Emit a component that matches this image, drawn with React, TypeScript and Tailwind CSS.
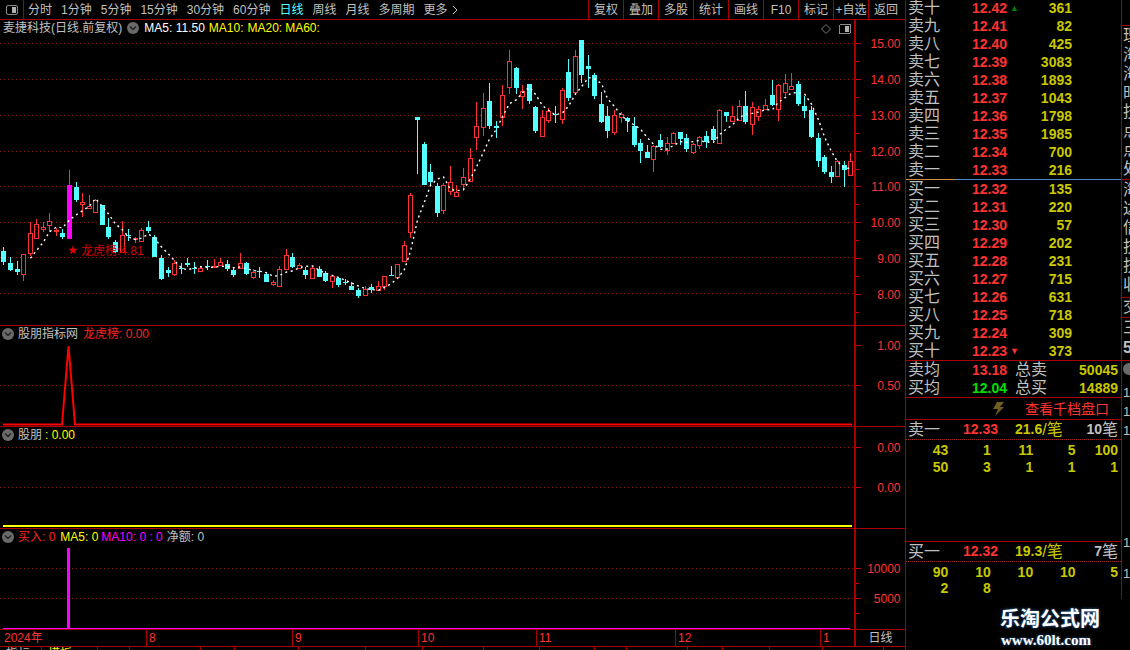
import type { ReactNode } from 'react'

const LINE = 'border-[#a80000]'
const CJK = "font-['Liberation_Sans','Noto_Sans_CJK_SC',sans-serif]"

// candles as [wickTop, bodyTop, bodyBottom, wickBottom, kind], read in 3x crop coordinates
type Raw = [number, number, number, number, 'r' | 'c' | 'm']

const partA: Raw[] = [
  [292, 303, 335, 345, 'c'], [322, 339, 360, 363, 'c'], [333, 357, 366, 375, 'c'], [313, 313, 371, 392, 'r'],
  [217, 250, 310, 318, 'r'], [208, 223, 263, 265, 'r'], [217, 232, 238, 245, 'r'], [190, 214, 226, 245, 'r'],
  [235, 240, 243, 258, 'r'], [238, 250, 260, 268, 'c'], [60, 105, 267, 267, 'm'], [97, 111, 149, 155, 'c'],
  [130, 157, 163, 200, 'r'], [136, 167, 173, 178, 'r'], [148, 151, 185, 187, 'r'], [165, 166, 225, 226, 'c'],
  [205, 232, 260, 268, 'c'], [270, 276, 305, 310, 'c'], [213, 256, 305, 310, 'r'], [238, 254, 257, 272, 'c'],
  [260, 264, 268, 280, 'r'], [235, 241, 272, 275, 'r'], [213, 232, 243, 248, 'c'], [256, 260, 320, 320, 'c'],
  [316, 324, 388, 391, 'c'], [350, 360, 369, 380, 'c'], [330, 340, 371, 378, 'r'], [340, 355, 357, 372, 'c'],
  [325, 339, 345, 350, 'c'], [336, 355, 357, 372, 'c'], [350, 353, 362, 363, 'r'], [330, 348, 351, 360, 'c'],
  [328, 347, 352, 355, 'r'], [323, 337, 344, 347, 'r'], [330, 343, 358, 362, 'c'], [350, 361, 375, 381, 'c'],
  [309, 340, 354, 358, 'r'], [336, 339, 372, 376, 'c'], [358, 367, 380, 386, 'r'], [351, 364, 366, 384, 'c'],
  [368, 372, 395, 397, 'c'], [390, 397, 401, 408, 'r'], [348, 358, 407, 408, 'r'], [297, 316, 358, 360, 'r'],
  [309, 321, 351, 353, 'c'], [340, 346, 355, 358, 'r'], [350, 360, 374, 387, 'c'], [350, 355, 383, 384, 'r'],
  [349, 357, 380, 381, 'c'], [363, 368, 394, 397, 'c'], [375, 379, 392, 414, 'r'], [380, 384, 404, 410, 'c'],
  [388, 397, 399, 404, 'c'], [396, 408, 419, 420, 'c'], [415, 420, 438, 443, 'c'], [408, 416, 434, 438, 'r'],
  [403, 412, 421, 428, 'c'], [394, 408, 420, 422, 'r'], [378, 379, 407, 420, 'r'], [348, 376, 378, 378, 'c'],
  [343, 343, 380, 382, 'r'], [274, 286, 332, 333, 'r'], [130, 136, 245, 265, 'r'],
]

const partB: Raw[] = [
  [262, 262, 270, 432, 'c'], [337, 342, 465, 465, 'c'], [403, 426, 456, 465, 'c'], [458, 468, 549, 561, 'c'],
  [458, 466, 540, 552, 'r'], [408, 457, 482, 495, 'r'], [465, 486, 497, 500, 'r'], [415, 442, 461, 480, 'r'],
  [354, 385, 452, 455, 'r'], [216, 289, 320, 360, 'r'], [190, 235, 290, 318, 'r'], [160, 213, 288, 296, 'c'],
  [273, 288, 293, 324, 'c'], [165, 196, 260, 288, 'r'], [60, 94, 170, 192, 'r'], [111, 114, 174, 192, 'c'],
  [165, 184, 197, 237, 'r'], [162, 162, 213, 222, 'c'], [228, 232, 303, 309, 'c'], [240, 262, 317, 318, 'r'],
  [235, 244, 269, 279, 'r'], [228, 252, 256, 279, 'c'], [175, 181, 266, 282, 'r'], [87, 126, 204, 214, 'c'],
  [60, 79, 185, 190, 'r'], [30, 30, 135, 159, 'c'], [75, 108, 117, 174, 'c'], [129, 135, 198, 207, 'c'],
  [186, 222, 276, 279, 'c'], [228, 258, 303, 324, 'c'], [241, 256, 305, 315, 'r'], [245, 252, 262, 279, 'r'],
  [262, 264, 273, 306, 'c'], [262, 288, 345, 351, 'c'], [327, 339, 363, 399, 'c'], [345, 366, 384, 385, 'c'],
  [345, 347, 388, 426, 'r'], [312, 330, 352, 355, 'c'], [322, 340, 360, 375, 'r'], [306, 310, 339, 340, 'r'],
  [306, 306, 327, 345, 'c'], [312, 324, 357, 366, 'c'], [339, 343, 366, 372, 'r'], [319, 322, 345, 358, 'r'],
  [303, 318, 337, 354, 'c'], [288, 297, 330, 333, 'c'], [237, 240, 338, 339, 'r'], [246, 246, 258, 276, 'c'],
  [228, 259, 272, 273, 'r'], [210, 228, 270, 270, 'r'], [183, 228, 276, 282, 'c'], [216, 232, 281, 315, 'r'],
  [228, 238, 257, 273, 'r'], [207, 226, 236, 240, 'r'], [150, 195, 225, 228, 'c'], [162, 165, 238, 273, 'r'],
  [132, 160, 187, 198, 'r'], [129, 168, 178, 180, 'r'], [153, 162, 222, 228, 'c'], [198, 228, 243, 264, 'c'],
  [228, 240, 321, 324, 'c'], [309, 324, 393, 411, 'c'], [375, 381, 426, 432, 'c'], [408, 426, 441, 459, 'c'],
  [390, 393, 438, 441, 'r'], [393, 405, 419, 470, 'c'], [369, 394, 434, 435, 'r'],
]

const toReal = (rows: Raw[], originY: number) =>
  rows.map(([a, b, c, d, k]) => ({
    wickTop: Math.round(originY + a / 3),
    top: Math.round(originY + b / 3),
    bottom: Math.round(originY + c / 3),
    wickBottom: Math.round(originY + d / 3),
    kind: k,
  }))

const candles = [...toReal(partA, 150), ...toReal(partB, 30)]
const candleX = (i: number) => Math.round(3.4 + 6.566 * i) + 0.5

const closes = candles.map((c) => (c.kind === 'c' ? c.bottom : c.top))
const ma5 = closes
  .map((_, i) => {
    if (i < 4) return null
    const avg = closes.slice(i - 4, i + 1).reduce((s, v) => s + v, 0) / 5
    return `${candleX(i)},${avg.toFixed(1)}`
  })
  .filter(Boolean)
  .join(' ')

const sells = [
  ['卖十', '12.42', '361'], ['卖九', '12.41', '82'], ['卖八', '12.40', '425'], ['卖七', '12.39', '3083'],
  ['卖六', '12.38', '1893'], ['卖五', '12.37', '1043'], ['卖四', '12.36', '1798'], ['卖三', '12.35', '1985'],
  ['卖二', '12.34', '700'], ['卖一', '12.33', '216'],
]
const buys = [
  ['买一', '12.32', '135'], ['买二', '12.31', '220'], ['买三', '12.30', '57'], ['买四', '12.29', '202'],
  ['买五', '12.28', '231'], ['买六', '12.27', '715'], ['买七', '12.26', '631'], ['买八', '12.25', '718'],
  ['买九', '12.24', '309'], ['买十', '12.23', '373'],
]

const tabs = ['分时', '1分钟', '5分钟', '15分钟', '30分钟', '60分钟', '日线', '周线', '月线', '多周期', '更多']
const actions = ['复权', '叠加', '多股', '统计', '画线', 'F10', '标记', '+自选', '返回']
const footerWidths = [42, 56, 32, 71, 34, 64, 67, 57, 61, 56, 55, 32, 61, 35, 47, 53, 61, 22]
const dateMarks: [string, number][] = [['8', 147], ['9', 293], ['10', 419], ['11', 537], ['12', 676], ['1', 821]]

function Chevron() {
  return (
    <svg width="12" height="12" viewBox="0 0 12 12" className="shrink-0" aria-hidden>
      <circle cx="6" cy="6" r="6" fill="#6a6a6a" />
      <path d="M3 4.5 6 7.5 9 4.5" fill="none" stroke="#222" strokeWidth="1.5" />
    </svg>
  )
}

function PanelIcon() {
  return (
    <svg width="12" height="10" viewBox="0 0 12 10" aria-hidden>
      <rect x="0.5" y="0.5" width="11" height="9" rx="1.5" fill="none" stroke="#8a8a8a" />
      <rect x="6" y="2" width="4" height="6" fill="#b0b0b0" />
    </svg>
  )
}

function Grid({ ys }: { ys: number[] }) {
  return (
    <>
      {ys.map((y) => (
        <line key={y} x1="0" x2="855" y1={y + 0.5} y2={y + 0.5} stroke="#8a1c1c" strokeDasharray="1 3" />
      ))}
    </>
  )
}

function Axis({ top, height, labels, minor = [] }: { top: number; height: number; labels: [string, number][]; minor?: number[] }) {
  return (
    <svg width="49" height={height} viewBox={`0 ${top} 49 ${height}`} className={`shrink-0 border-l-2 ${LINE} box-content`}>
      {labels.map(([t, y]) => (
        <g key={t + y}>
          <line x1="0" x2="5" y1={y + 0.5} y2={y + 0.5} stroke="#c00000" shapeRendering="crispEdges" />
          <text x="44.5" y={y + 4.5} textAnchor="end" fontSize="12" fill="#ff3232" fontFamily="Liberation Sans, sans-serif">
            {t}
          </text>
        </g>
      ))}
      {minor.map((y) => (
        <line key={y} x1="0" x2="3" y1={y + 0.5} y2={y + 0.5} stroke="#c00000" shapeRendering="crispEdges" />
      ))}
    </svg>
  )
}

function Panel({ top, height, label, axis, children }: { top: number; height: number; label: ReactNode; axis: ReactNode; children: ReactNode }) {
  return (
    <div className={`relative flex border-b ${LINE}`} style={{ height: height + 1 }}>
      <svg width="854" height={height} viewBox={`0 ${top} 854 ${height}`} className="shrink-0" shapeRendering="crispEdges">
        {children}
      </svg>
      {axis}
      <div className={`absolute left-[2px] top-[1px] flex items-center whitespace-nowrap text-[12px] leading-[14px] text-[#c0c0c0] ${CJK}`}>
        {label}
      </div>
    </div>
  )
}

function BookRow({ row, mark }: { row: string[]; mark?: ReactNode }) {
  return (
    <div className="flex h-[18px] items-center">
      <span className="w-[66px] shrink-0 pl-[2px] text-[16px] leading-[18px] text-[#c0c0c0]">{row[0]}</span>
      <span className="w-[36px] shrink-0 text-[14px] font-bold text-[#ff3232]">{row[1]}</span>
      <span className="w-[12px] shrink-0 pl-[2px] text-[9px] leading-[10px]">{mark}</span>
      <span className="w-[52px] shrink-0 text-right text-[14px] font-bold text-[#c8c800]">{row[2]}</span>
    </div>
  )
}

function Depth({ rows, rowClass }: { rows: string[][]; rowClass: string }) {
  return (
    <div className="pr-[3px]">
      {rows.map((cells, r) => (
        <div key={r} className={`grid grid-cols-5 items-center text-right text-[14px] font-bold text-[#c8c800] ${rowClass}`}>
          {cells.map((c, i) => (
            <span key={i}>{c}</span>
          ))}
        </div>
      ))}
    </div>
  )
}

function QuoteHead({ label, price, per, count }: { label: string; price: string; per: string; count: string }) {
  return (
    <div className="flex h-[20px] items-center border-b border-dotted border-[#a82020] pr-[3px]">
      <span className="w-[57px] shrink-0 pl-[2px] text-[16px] leading-[18px] text-[#c0c0c0]">{label}</span>
      <span className="w-[52px] shrink-0 text-[14px] font-bold text-[#ff3232]">{price}</span>
      <span className="text-[14px] font-bold text-[#c8c800]">{per}</span>
      <span className="text-[16px] leading-[18px] text-[#c8c800]">/笔</span>
      <span className="ml-auto text-[14px] font-bold text-[#c0c0c0]">{count}</span>
      <span className="text-[16px] leading-[18px] text-[#c0c0c0]">笔</span>
    </div>
  )
}

function Totals({ a, b, c, d, green }: { a: string; b: string; c: string; d: string; green?: boolean }) {
  return (
    <div className="flex h-[18px] items-center pr-[3px]">
      <span className="w-[66px] shrink-0 pl-[2px] text-[16px] leading-[18px] text-[#c0c0c0]">{a}</span>
      <span className={`w-[43px] shrink-0 text-[14px] font-bold ${green ? 'text-[#00e000]' : 'text-[#ff3232]'}`}>{b}</span>
      <span className="text-[16px] leading-[18px] text-[#c0c0c0]">{c}</span>
      <span className="ml-auto text-[14px] font-bold text-[#c8c800]">{d}</span>
    </div>
  )
}

function SideColumn({ chars, heightClass }: { chars: string[]; heightClass: string }) {
  return (
    <div className={`flex flex-col border-b ${LINE} pl-[1px] ${heightClass}`}>
      {chars.map((c, i) => (
        <span key={i} className="h-[19px] text-[16px] leading-[19px] text-[#c0c0c0]">
          {c}
        </span>
      ))}
    </div>
  )
}

export default function App() {
  return (
    <div className={`relative flex h-[650px] w-[1130px] overflow-hidden bg-black ${CJK}`}>
      <div className={`flex w-[906px] shrink-0 flex-col border-r ${LINE}`}>
        {/* toolbar */}
        <div className={`flex h-[20px] shrink-0 items-center border-b ${LINE} text-[12px] text-[#c0c0c0]`}>
          <div className={`flex h-full w-[24px] items-center justify-center border-r ${LINE}`}>
            <PanelIcon />
          </div>
          <div className="flex items-center gap-[9px] pl-[4px]">
            {tabs.map((t) => (
              <span key={t} className={t === '日线' ? 'text-[#54ffff]' : ''}>
                {t}
              </span>
            ))}
            <svg width="6" height="10" viewBox="0 0 6 10" className="-ml-[5px]" aria-hidden>
              <path d="M1 1l4 4-4 4" fill="none" stroke="#c0c0c0" />
            </svg>
          </div>
          <div className="ml-auto flex h-full">
            {actions.map((a) => (
              <span key={a} className={`flex h-full w-[35px] items-center justify-center border-l ${LINE} whitespace-nowrap`}>
                {a}
              </span>
            ))}
            <span className="w-[2px]" />
          </div>
        </div>

        {/* main candlestick chart */}
        <Panel
          top={20}
          height={305}
          label={
            <>
              <span className="ml-[1px]">麦捷科技(日线.前复权)</span>
              <span className="ml-[5px]"><Chevron /></span>
              <span className="ml-[5px] text-white">MA5: 11.50</span>
              <span className="ml-[4px] text-[#ffff00]">MA10:</span>
              <span className="ml-[4px] text-[#ffff00]">MA20:</span>
              <span className="ml-[3px] text-[#ffff00]">MA60:</span>
            </>
          }
          axis={
            <Axis
              top={20}
              height={305}
              labels={[['15.00', 43], ['14.00', 79], ['13.00', 115], ['12.00', 151], ['11.00', 186], ['10.00', 222], ['9.00', 258], ['8.00', 294]]}
              minor={[61, 97, 133, 169, 204, 240, 276, 312]}
            />
          }
        >
          <Grid ys={[43, 79, 115, 151, 186, 222, 257, 293]} />
          {candles.map((c, i) => {
            const x = candleX(i)
            const color = c.kind === 'c' ? '#54ffff' : '#ff3232'
            return (
              <g key={i}>
                <line x1={x} x2={x} y1={c.wickTop} y2={c.wickBottom} stroke={color} />
                {c.kind === 'r' ? (
                  <rect x={x - 2} y={c.top + 0.5} width="4" height={Math.max(c.bottom - c.top, 1)} fill="#000" stroke={color} />
                ) : (
                  <rect x={x - 2.5} y={c.top} width="5" height={Math.max(c.bottom - c.top, 1)} fill={c.kind === 'm' ? '#ff00ff' : color} />
                )}
              </g>
            )
          })}
          <polyline points={ma5} fill="none" stroke="#fff" strokeWidth="1.4" strokeDasharray="2 3.5" shapeRendering="auto" />
          <g shapeRendering="auto">
            <path d="M73 245.5l1.2 3.3h3.5l-2.8 2.1 1 3.4-2.9-2-2.9 2 1-3.4-2.8-2.1h3.5z" fill="#e00000" />
            <text x="81" y="254.5" fontSize="12" fill="#d80000" fontFamily="Liberation Sans, Noto Sans CJK SC, sans-serif">龙虎榜:4.81</text>
          </g>
          <g shapeRendering="auto">
            <path d="M826 24.5l4.5 4.5-4.5 4.5-4.5-4.5z" fill="none" stroke="#7a7a7a" />
          </g>
          <g transform="translate(839 24)">
            <rect x="0.5" y="0.5" width="11" height="9" rx="1.5" fill="none" stroke="#8a8a8a" />
            <rect x="6" y="2" width="4" height="6" fill="#b0b0b0" />
          </g>
        </Panel>

        {/* indicator panes */}
        <Panel
          top={326}
          height={100}
          label={
            <>
              <Chevron />
              <span className="ml-[4px]">股朋指标网</span>
              <span className="ml-[5px] text-[#ff2020]">龙虎榜: 0.00</span>
            </>
          }
          axis={<Axis top={326} height={100} labels={[['1.00', 345], ['0.50', 385]]} />}
        >
          <Grid ys={[385]} />
          <polyline points="3,424.5 62,424.5 68.5,346 75,424.5 852,424.5" fill="none" stroke="#ff0000" strokeWidth="2" shapeRendering="auto" />
        </Panel>

        <Panel
          top={427}
          height={101}
          label={
            <>
              <Chevron />
              <span className="ml-[4px]">股朋</span>
              <span className="ml-[3px] text-[#ffff00]">: 0.00</span>
            </>
          }
          axis={<Axis top={427} height={101} labels={[['0.00', 447], ['0.00', 487]]} />}
        >
          <Grid ys={[447, 487]} />
          <rect x="3" y="525" width="849" height="2" fill="#ffff00" />
        </Panel>

        <Panel
          top={529}
          height={100}
          label={
            <>
              <Chevron />
              <span className="ml-[4px] text-[#ff2020]">买入: 0</span>
              <span className="ml-[5px] text-[#ffff00]">MA5: 0</span>
              <span className="ml-[3px] text-[#ff00ff]">MA10: 0 : 0</span>
              <span className="ml-[4px]">净额: 0</span>
            </>
          }
          axis={<Axis top={529} height={100} labels={[['10000', 568], ['5000', 598]]} minor={[583, 613]} />}
        >
          <Grid ys={[568, 598]} />
          <rect x="67" y="548" width="3" height="80" fill="#ff00ff" />
          <rect x="3" y="628" width="847" height="2" fill="#ff00ff" />
        </Panel>

        {/* date axis */}
        <div className={`flex h-[17px] shrink-0 border-b ${LINE}`}>
          <div className="relative w-[854px] shrink-0 text-[12px] leading-[16px] text-[#ff3232]">
            <span className="absolute left-[4px]">2024年</span>
            {dateMarks.map(([t, x]) => (
              <span key={x} className={`absolute h-full border-l ${LINE} pl-[2px]`} style={{ left: x - 1 }}>
                {t}
              </span>
            ))}
          </div>
          <span className={`flex flex-1 items-center justify-center border-l-2 ${LINE} text-[12px] text-[#c0c0c0]`}>日线</span>
        </div>

        {/* footer tabs, cut off by the window edge */}
        <div className="flex flex-1 overflow-hidden text-[12px] leading-[14px] text-[#c0c0c0]">
          {footerWidths.map((w, i) => (
            <span key={i} className={`shrink-0 border-r ${LINE} pl-[6px]`} style={{ width: w }}>
              {i === 0 ? '指标' : i === 1 ? <span className="text-[#ffff00]">模板</span> : i === 2 ? '+' : ''}
            </span>
          ))}
        </div>
      </div>

      {/* order book */}
      <div className="w-[216px] shrink-0">
        <div className={`h-[600px] border-r ${LINE}`}>
          <div className="-mt-[1px]">
            {sells.map((r, i) => (
              <BookRow key={r[0]} row={r} mark={i === 0 ? <span className="text-[#008000]">▲</span> : undefined} />
            ))}
          </div>
          <div className="flex h-[1px]">
            <div className="w-[50px] bg-[#d09040]" />
            <div className="flex-1 bg-[#4a8ac8]" />
          </div>
          {buys.map((r, i) => (
            <BookRow key={r[0]} row={r} mark={i === 9 ? <span className="text-[#ff3232]">▼</span> : undefined} />
          ))}
          <div className={`border-t ${LINE}`}>
            <Totals a="卖均" b="13.18" c="总卖" d="50045" />
            <Totals a="买均" b="12.04" c="总买" d="14889" green />
          </div>
          <div className={`flex h-[23px] items-center border-y ${LINE}`}>
            <svg width="12" height="14" viewBox="0 0 12 14" className="ml-[87px]" aria-hidden>
              <path d="M4 0h7L7 5h4L2 14l3-7H0z" fill="#6e5c20" />
            </svg>
            <span className="ml-[20px] text-[14px] leading-[20px] text-[#ff3232]">查看千档盘口</span>
          </div>
          <QuoteHead label="卖一" price="12.33" per="21.6" count="10" />
          <Depth rows={[['43', '1', '11', '5', '100'], ['50', '3', '1', '1', '1']]} rowClass="h-[17px]" />
          <div className={`mt-[67px] border-t ${LINE}`}>
            <QuoteHead label="买一" price="12.32" per="19.3" count="7" />
            <Depth rows={[['90', '10', '10', '10', '5'], ['2', '8', '', '', '']]} rowClass="h-[16px]" />
          </div>
        </div>
      </div>

      {/* clipped neighbour panel on the far right */}
      <div className="min-w-0 flex-1 overflow-hidden">
        <div className={`h-[26px] border-b ${LINE}`} />
        <SideColumn chars={['理', '海', '海', '时', '技', '点', '点', '处']} heightClass="h-[154px]" />
        <SideColumn chars={['海', '达', '信', '技', '技', '收']} heightClass="h-[118px]" />
        <div className={`h-[20px] border-b ${LINE} pl-[1px] text-[16px] leading-[18px] text-[#c0c0c0]`}>交</div>
        <div className={`h-[43px] border-b ${LINE} pl-[1px] text-[16px] leading-[20px] text-[#c0c0c0]`}>
          三
          <div className="font-bold">5</div>
        </div>
        <div className="mt-[2px] pl-[1px] text-[13px] leading-[19px] text-[#c0c0c0]">
          <div className="h-[12px] w-[12px] rounded-full bg-[#6a6a6a]" />
          <div className="mt-[8px]">1</div>
          <div>1</div>
          <div>1</div>
          <div className="mt-[93px]">1</div>
          <div className="mt-[12px]">1</div>
        </div>
      </div>

      {/* site watermark */}
      <div className="absolute left-[998px] top-[607px] flex w-[104px] flex-col items-center text-white">
        <span className="text-[20px] font-bold leading-[25px] [text-shadow:0_0_3px_#3a78c0]">乐淘公式网</span>
        <span className="pr-[8px] font-['Liberation_Serif',serif] text-[15px] font-bold leading-[16px] [text-shadow:0_0_3px_#3a78c0]">www.60lt.com</span>
      </div>
    </div>
  )
}
